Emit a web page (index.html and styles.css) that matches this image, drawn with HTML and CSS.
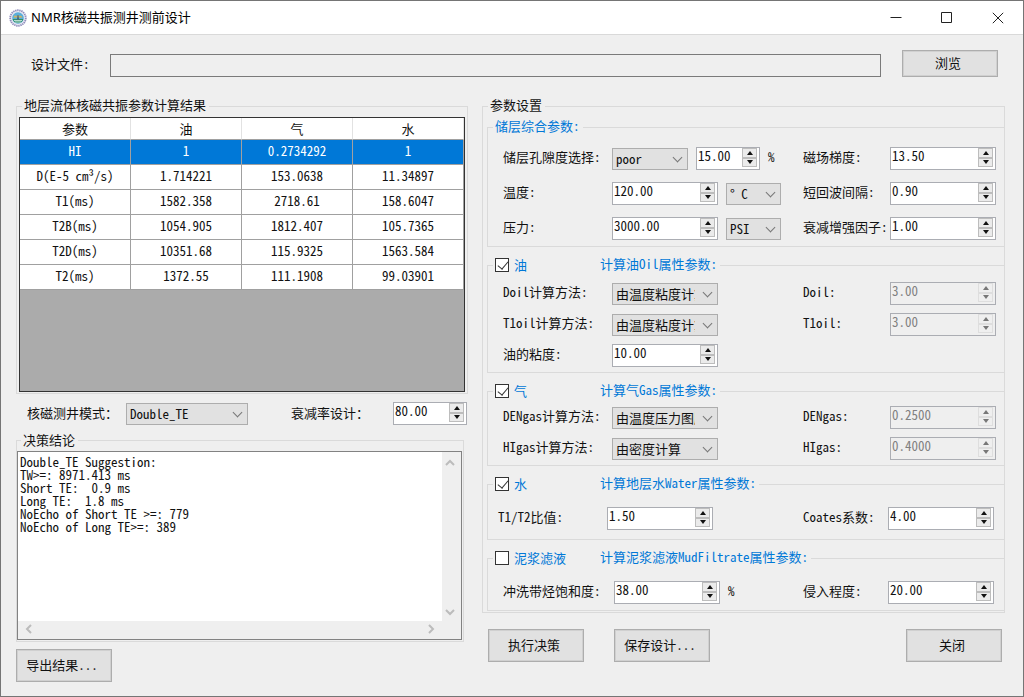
FILE: index.html
```html
<!DOCTYPE html>
<html lang="zh-CN">
<head>
<meta charset="utf-8">
<title>NMR核磁共振测井测前设计</title>
<link rel="stylesheet" href="styles.css">
</head>
<body>
<div class="window">
  <header class="titlebar">
    <svg class="app-icon" viewBox="0 0 18 18" aria-hidden="true">
      <circle cx="9" cy="9" r="7.8" fill="#e9e9f4" stroke="#8f8dbb" stroke-width="1.8" stroke-dasharray="1.4 0.7"/>
      <circle cx="9" cy="9" r="5.8" fill="#5aaedb"/>
      <path d="M3.6 10h10.8a5.6 5.6 0 0 1-10.8 0z" fill="#2f8f6b"/>
      <path d="M4.5 8.5c1-2.5 2-2.5 3-1 1-2 2-2 3-.2 1-1 2-.6 3 1.2z" fill="#d9b45a"/>
      <path d="M8.5 6h1l.6 5H7.900z" fill="#4b6a7d"/>
      <path d="M5 11.5h8M6 13h6" stroke="#d8f0ea" stroke-width=".8"/>
    </svg>
    <h1 class="title">NMR核磁共振测井测前设计</h1>
    <div class="caption-buttons">
      <button type="button" class="caption" aria-label="最小化"><svg viewBox="0 0 12 12"><path d="M.5 5.5h11"/></svg></button>
      <button type="button" class="caption" aria-label="最大化"><svg viewBox="0 0 12 12"><path d="M.5 .5h10v10H.5z"/></svg></button>
      <button type="button" class="caption" aria-label="关闭窗口"><svg viewBox="0 0 12 12"><path d="M.8.8l10.400 10.400M11.200.8L.8 11.200"/></svg></button>
    </div>
  </header>

  <div class="file-row">
    <label for="file">设计文件:</label>
    <input id="file" class="file-input" type="text" readonly>
    <button type="button" class="btn btn-browse">浏览</button>
  </div>

  <main class="columns">
    <section class="left">
      <fieldset class="group group-table">
        <legend>地层流体核磁共振参数计算结果</legend>
        <div class="grid-view">
          <table>
            <thead><tr><th>参数</th><th>油</th><th>气</th><th>水</th></tr></thead>
            <tbody>
              <tr class="selected"><td>HI</td><td>1</td><td>0.2734292</td><td>1</td></tr>
              <tr><td>D(E-5 cm³/s)</td><td>1.714221</td><td>153.0638</td><td>11.34897</td></tr>
              <tr><td>T1(ms)</td><td>1582.358</td><td>2718.61</td><td>158.6047</td></tr>
              <tr><td>T2B(ms)</td><td>1054.905</td><td>1812.407</td><td>105.7365</td></tr>
              <tr><td>T2D(ms)</td><td>10351.68</td><td>115.9325</td><td>1563.584</td></tr>
              <tr><td>T2(ms)</td><td>1372.55</td><td>111.1908</td><td>99.03901</td></tr>
            </tbody>
          </table>
        </div>
      </fieldset>

      <div class="mode-row">
        <label for="mode">核磁测井模式：</label>
        <span class="drop"><select id="mode"><option>Double_TE</option></select></span>
        <label class="decay" for="decay">衰减率设计：</label>
        <span class="spin"><input id="decay" type="number" step="0.01" value="80.00"><span class="arrows"><button type="button" aria-label="增加"></button><button type="button" aria-label="减少"></button></span></span>
      </div>

      <fieldset class="group group-result">
        <legend>决策结论</legend>
        <div class="memo">
          <textarea aria-label="决策结论" wrap="off">Double_TE Suggestion:
TW&gt;=: 8971.413 ms
Short TE:  0.9 ms
Long TE:  1.8 ms
NoEcho of Short TE &gt;=: 779
NoEcho of Long TE&gt;=: 389</textarea>
          <div class="bar bar-v">
            <svg viewBox="0 0 10 10"><path d="M1 7l4-4 4 4"/></svg>
            <svg viewBox="0 0 10 10"><path d="M1 3l4 4 4-4"/></svg>
          </div>
          <div class="bar bar-h">
            <svg viewBox="0 0 10 10"><path d="M7 1L3 5l4 4"/></svg>
            <svg viewBox="0 0 10 10"><path d="M3 1l4 4-4 4"/></svg>
          </div>
        </div>
      </fieldset>
      <div class="left-actions"><button type="button" class="btn">导出结果...</button></div>
    </section>

    <section class="right">
      <fieldset class="group group-settings">
        <legend>参数设置</legend>

        <fieldset class="group sub sub-common">
          <legend>储层综合参数:</legend>
          <div class="row">
            <label for="poro">储层孔隙度选择:</label>
            <div class="controls">
              <span class="drop drop-m"><select id="poro"><option>poor</option></select></span>
              <span class="spin spin-s"><input type="number" aria-label="孔隙度" step="0.01" value="15.00"><span class="arrows"><button type="button" aria-label="增加"></button><button type="button" aria-label="减少"></button></span></span>
              <span class="unit">%</span>
            </div>
            <label for="grad">磁场梯度:</label>
            <span class="spin"><input id="grad" type="number" step="0.01" value="13.50"><span class="arrows"><button type="button" aria-label="增加"></button><button type="button" aria-label="减少"></button></span></span>
          </div>
          <div class="row">
            <label for="temp">温度:</label>
            <div class="controls">
              <span class="spin"><input id="temp" type="number" step="0.01" value="120.00"><span class="arrows"><button type="button" aria-label="增加"></button><button type="button" aria-label="减少"></button></span></span>
              <span class="drop drop-s"><select aria-label="温度单位"><option>° C</option></select></span>
            </div>
            <label for="echo">短回波间隔:</label>
            <span class="spin"><input id="echo" type="number" step="0.01" value="0.90"><span class="arrows"><button type="button" aria-label="增加"></button><button type="button" aria-label="减少"></button></span></span>
          </div>
          <div class="row">
            <label for="pres">压力:</label>
            <div class="controls">
              <span class="spin"><input id="pres" type="number" step="0.01" value="3000.00"><span class="arrows"><button type="button" aria-label="增加"></button><button type="button" aria-label="减少"></button></span></span>
              <span class="drop drop-s"><select aria-label="压力单位"><option>PSI</option></select></span>
            </div>
            <label for="enh">衰减增强因子:</label>
            <span class="spin"><input id="enh" type="number" step="0.01" value="1.00"><span class="arrows"><button type="button" aria-label="增加"></button><button type="button" aria-label="减少"></button></span></span>
          </div>
        </fieldset>

        <fieldset class="group sub sub-oil">
          <legend><label class="check"><input type="checkbox" checked>油</label><span>计算油Oil属性参数:</span></legend>
          <div class="row">
            <label for="doilm">Doil计算方法:</label>
            <div class="controls"><span class="drop"><select id="doilm"><option>由温度粘度计算</option></select></span></div>
            <label for="doil">Doil:</label>
            <span class="spin"><input id="doil" type="number" step="0.01" value="3.00" disabled><span class="arrows"><button type="button" aria-label="增加" disabled></button><button type="button" aria-label="减少" disabled></button></span></span>
          </div>
          <div class="row">
            <label for="t1oilm">T1oil计算方法:</label>
            <div class="controls"><span class="drop"><select id="t1oilm"><option>由温度粘度计算</option></select></span></div>
            <label for="t1oil">T1oil:</label>
            <span class="spin"><input id="t1oil" type="number" step="0.01" value="3.00" disabled><span class="arrows"><button type="button" aria-label="增加" disabled></button><button type="button" aria-label="减少" disabled></button></span></span>
          </div>
          <div class="row">
            <label for="visc">油的粘度:</label>
            <div class="controls"><span class="spin"><input id="visc" type="number" step="0.01" value="10.00"><span class="arrows"><button type="button" aria-label="增加"></button><button type="button" aria-label="减少"></button></span></span></div>
          </div>
        </fieldset>

        <fieldset class="group sub sub-gas">
          <legend><label class="check"><input type="checkbox" checked>气</label><span>计算气Gas属性参数:</span></legend>
          <div class="row">
            <label for="dengasm">DENgas计算方法:</label>
            <div class="controls"><span class="drop"><select id="dengasm"><option>由温度压力图版</option></select></span></div>
            <label for="dengas">DENgas:</label>
            <span class="spin"><input id="dengas" type="number" step="0.0001" value="0.2500" disabled><span class="arrows"><button type="button" aria-label="增加" disabled></button><button type="button" aria-label="减少" disabled></button></span></span>
          </div>
          <div class="row">
            <label for="higasm">HIgas计算方法:</label>
            <div class="controls"><span class="drop"><select id="higasm"><option>由密度计算</option></select></span></div>
            <label for="higas">HIgas:</label>
            <span class="spin"><input id="higas" type="number" step="0.0001" value="0.4000" disabled><span class="arrows"><button type="button" aria-label="增加" disabled></button><button type="button" aria-label="减少" disabled></button></span></span>
          </div>
        </fieldset>

        <fieldset class="group sub sub-water">
          <legend><label class="check"><input type="checkbox" checked>水</label><span>计算地层水Water属性参数:</span></legend>
          <div class="row">
            <label for="ratio">T1/T2比值:</label>
            <div class="controls"><span class="spin"><input id="ratio" type="number" step="0.01" value="1.50"><span class="arrows"><button type="button" aria-label="增加"></button><button type="button" aria-label="减少"></button></span></span></div>
            <label for="coates">Coates系数:</label>
            <span class="spin"><input id="coates" type="number" step="0.01" value="4.00"><span class="arrows"><button type="button" aria-label="增加"></button><button type="button" aria-label="减少"></button></span></span>
          </div>
        </fieldset>

        <fieldset class="group sub sub-mud">
          <legend><label class="check"><input type="checkbox">泥浆滤液</label><span>计算泥浆滤液MudFiltrate属性参数:</span></legend>
          <div class="row">
            <label for="sat">冲洗带烃饱和度:</label>
            <div class="controls">
              <span class="spin"><input id="sat" type="number" step="0.01" value="38.00"><span class="arrows"><button type="button" aria-label="增加"></button><button type="button" aria-label="减少"></button></span></span>
              <span class="unit">%</span>
            </div>
            <label for="inv">侵入程度:</label>
            <span class="spin"><input id="inv" type="number" step="0.01" value="20.00"><span class="arrows"><button type="button" aria-label="增加"></button><button type="button" aria-label="减少"></button></span></span>
          </div>
        </fieldset>
      </fieldset>

      <div class="right-actions">
        <button type="button" class="btn">执行决策</button>
        <button type="button" class="btn">保存设计...</button>
        <button type="button" class="btn btn-close">关闭</button>
      </div>
    </section>
  </main>
</div>
</body>
</html>
```
FILE: styles.css
```css
* { box-sizing: border-box; }

body {
  margin: 0;
  background: #efefef;
  color: #111;
  font-family: "Noto Sans Mono CJK SC", "Noto Sans CJK SC", monospace;
  font-size: 13px;
  line-height: 18px;
}

button, input, select, textarea {
  margin: 0;
  font: inherit;
  color: inherit;
  border-radius: 0;
}

.window {
  display: flex;
  flex-direction: column;
  min-height: 100vh;
  border: 1px solid #757575;
}

/* title bar */
.titlebar {
  display: flex;
  align-items: center;
  height: 34px;
  padding-left: 8px;
  background: #fff;
  border-bottom: 1px solid #d9d9d9;
}
.app-icon { width: 18px; height: 18px; }
.title {
  flex: 1;
  margin: 0 0 2px 4px;
  font-family: "Noto Sans", "Noto Sans CJK SC", sans-serif;
  font-size: 13px;
  font-weight: 400;
  color: #000;
}
.caption-buttons { display: flex; }
.caption {
  display: grid;
  place-items: center;
  width: 51px;
  height: 33px;
  padding: 0;
  border: 0;
  background: none;
}
.caption svg { width: 12px; height: 12px; fill: none; stroke: #222; stroke-width: 1; }

/* file picker row */
.file-row {
  display: flex;
  align-items: flex-end;
  padding: 15px 25px 20px 30px;
}
.file-row label { width: 79px; line-height: 27px; }
.file-input {
  flex: 1;
  min-width: 0;
  height: 23px;
  margin-right: 21px;
  padding: 0 4px;
  border: 1px solid #7a7a7a;
  background: #efefef;
}

.btn {
  width: 96px;
  height: 33px;
  padding: 0 4px 2px 0;
  border: 1px solid #adadad;
  outline: 1px solid #d0d0d0;
  outline-offset: -2px;
  background: #e1e1e1;
}
.btn-browse { height: 27px; }

.columns {
  display: grid;
  grid-template-columns: 452fr 523fr;
  gap: 14px;
  padding: 0 18px 0 15px;
}

/* group boxes */
.group {
  min-width: 0;
  margin: 0;
  padding: 0;
  border: 1px solid #dadada;
}
.group > legend { margin-left: 4px; padding: 0 3px 0 2px; }
.group-table { padding: 2px 2px 1px; }
.group-table > legend, .group-settings > legend { line-height: 16px; padding-bottom: 2px; }
.group-table > legend { margin-left: 3px; }
.group-settings > legend { margin-left: 1px; }
.group-result { margin-right: 4px; padding: 2px 1px 1px 0; }

.grid-view {
  height: 275px;
  border: 1px solid #333;
  background: #ababab;
}
.grid-view table {
  width: 100%;
  table-layout: fixed;
  border-collapse: separate;
  border-spacing: 0;
  text-align: center;
}
.grid-view th {
  height: 22px;
  padding: 0;
  font-weight: 400;
  background: #fff;
  border-right: 1px solid #e2e2e2;
  border-bottom: 1px solid #a0a0a0;
}
.grid-view td {
  height: 25px;
  padding: 0 0 2px;
  background: #fff;
  border-right: 1px solid #a0a0a0;
  border-bottom: 1px solid #a0a0a0;
}
.grid-view .selected td { background: #0078d7; color: #fff; }

.mode-row {
  display: grid;
  grid-template-columns: 99px 122px 1fr 74px;
  align-items: center;
  padding: 8px 1px 6px 11px;
}
.mode-row label { padding-bottom: 2px; }
.mode-row .decay { padding-left: 43px; }

.memo {
  display: grid;
  grid-template: 1fr 18px / 1fr 19px;
  height: 189px;
  border: 1px solid #828282;
  background: #efefef;
}
.memo textarea {
  padding: 3px 2px;
  border: 0;
  background: #fff;
  line-height: 13px;
  resize: none;
  overflow: hidden;
}
.bar { display: flex; justify-content: space-between; }
.bar svg { width: 10px; height: 10px; fill: none; stroke: #bcbcbc; stroke-width: 2; }
.bar-v { flex-direction: column; padding: 6px 0 4px 3px; }
.bar-h { padding: 3px 6px 0 6px; }

.left-actions { padding-top: 7px; }

/* drop-down */
.drop { position: relative; display: block; width: 106px; }
.drop-m { width: 76px; }
.drop-s { width: 55px; }
.mode-row .drop { width: 122px; }
.drop select {
  display: block;
  width: 100%;
  height: 22px;
  padding: 0 22px 0 3px;
  border: 1px solid #adadad;
  background: #e1e1e1;
  appearance: none;
}
.drop::after {
  content: "";
  position: absolute;
  top: 6px;
  right: 7px;
  width: 6px;
  height: 6px;
  border: solid #777;
  border-width: 0 1px 1px 0;
  transform: rotate(45deg);
  pointer-events: none;
}

/* numeric up-down */
.spin {
  display: flex;
  width: 106px;
  height: 23px;
  padding: 0 2px 2px 0;
  border: 1px solid #abadb3;
  background: #fff;
}
.spin-s { width: 64px; }
.mode-row .spin { width: 74px; }
.spin input {
  flex: 1;
  min-width: 0;
  height: 18px;
  padding: 0 0 2px 1px;
  border: 0;
  background: none;
  appearance: textfield;
}
.spin input::-webkit-inner-spin-button { appearance: none; margin: 0; }
.arrows { display: grid; width: 15px; height: 19px; }
.arrows button {
  display: grid;
  place-items: center;
  padding: 0;
  border: 1px solid #bdbdbd;
  background: #ebebeb;
}
.arrows button::before {
  content: "";
  border: 3px solid transparent;
  border-top-width: 0;
  border-bottom: 4px solid #111;
}
.arrows button:last-child::before {
  border-top: 4px solid #111;
  border-bottom-width: 0;
}
.spin:has(input:disabled) { background: #efefef; }
.spin input:disabled { color: #808080; }
.arrows button:disabled { border-color: #dedede; background: #efefef; }
.arrows button:disabled::before { border-bottom-color: #777; }
.arrows button:last-child:disabled::before { border-top-color: #777; }

/* settings */
.group-settings { padding: 3px 0 1px 4px; }
.sub { margin: 0 -1px 9px 0; padding: 0 8px 0 15px; }
.sub:last-child { margin-bottom: 0; }
.sub > legend {
  margin-left: -10px;
  padding-bottom: 2px;
  color: #0078d7;
  line-height: 16px;
}
.sub > legend:has(.check) { display: flex; }
.check { display: flex; align-items: center; width: 105px; height: 18px; gap: 5px; }
.sub > legend:has(.check) { padding-bottom: 0; }
.check input {
  width: 14px;
  height: 14px;
  border: 1px solid #333;
  background: #fff;
  appearance: none;
}
.check input:checked::after {
  content: "";
  display: block;
  width: 5px;
  height: 9px;
  margin: 0 0 0 4px;
  border: solid #333;
  border-width: 0 1px 1px 0;
  transform: rotate(40deg);
}
.row {
  display: grid;
  grid-template-columns: 109px 1fr 87px 106px;
  align-items: center;
  height: 23px;
  white-space: nowrap;
}
.row + .row { margin-top: 8px; }
.row > label, .unit { padding-bottom: 3px; }
.controls { display: flex; align-items: center; gap: 8px; }
.sub-common { padding-top: 11px; padding-bottom: 6px; }
.sub-common .row + .row { margin-top: 12px; }
.sub-oil { padding-top: 8px; padding-bottom: 5px; }
.sub-gas { padding-top: 6px; padding-bottom: 5px; }
.sub-water { padding: 14px 10px 9px 10px; }
.sub-water > legend { margin-left: -5px; }
.sub-mud { padding: 14px 10px 6px 15px; }
.sub-water .row { grid-template-columns: 109px 1fr 85px 106px; }
.sub-mud .row { grid-template-columns: 111px 1fr 85px 106px; }

.right-actions {
  display: flex;
  gap: 30px;
  padding: 16px 3px 0 6px;
}
.btn-close { margin-left: auto; }
```
